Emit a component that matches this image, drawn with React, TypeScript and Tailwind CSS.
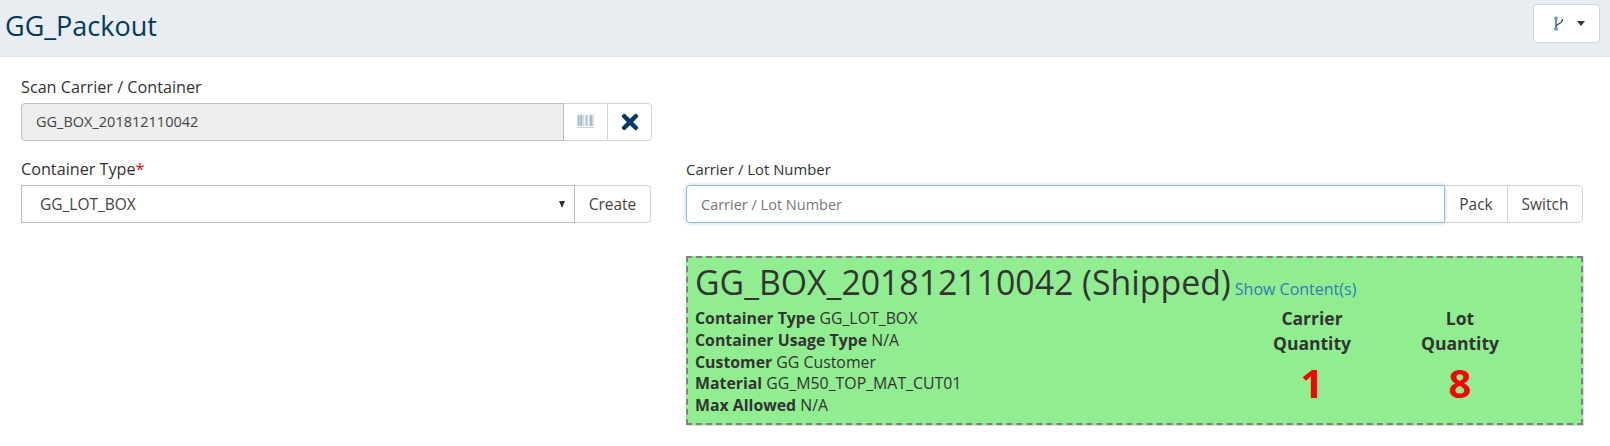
import React from 'react';
import { FaTimes } from 'react-icons/fa';

const BarcodeIcon = () => (
  <svg width="17" height="14" viewBox="0 0 17 14">
    <rect x="0" y="0" width="17" height="11" fill="#d3dde9" />
    <rect x="1" y="0" width="1" height="11" fill="#9fb5d0" />
    <rect x="3" y="0" width="2" height="11" fill="#a9bcd4" />
    <rect x="7" y="0" width="1" height="11" fill="#f2f5f9" />
    <rect x="9" y="0" width="1" height="11" fill="#a9bcd4" />
    <rect x="11" y="0" width="1" height="11" fill="#f2f5f9" />
    <rect x="13" y="0" width="2" height="11" fill="#a9bcd4" />
    <rect x="0" y="12" width="17" height="1" fill="#c3cedc" />
  </svg>
);

const BranchIcon = () => (
  <svg width="10" height="15" viewBox="0 0 10 15" fill="none" stroke="#1d3f5e" strokeWidth="1.2">
    <path d="M2 3V12" />
    <path d="M2 10C3 7.5 8.5 8 8.5 3" />
    <circle cx="2" cy="2.2" r="1.2" stroke="#2f7fd0" fill="#fff" />
    <circle cx="2" cy="12.8" r="1.2" stroke="#2f7fd0" fill="#fff" />
  </svg>
);

const details = [
  { label: 'Container Type', value: 'GG_LOT_BOX' },
  { label: 'Container Usage Type', value: 'N/A' },
  { label: 'Customer', value: 'GG Customer' },
  { label: 'Material', value: 'GG_M50_TOP_MAT_CUT01' },
  { label: 'Max Allowed', value: 'N/A' },
];

const quantities = [
  { top: 'Carrier', bottom: 'Quantity', value: 1 },
  { top: 'Lot', bottom: 'Quantity', value: 8 },
];

const App: React.FC = () => {
  return (
    <div className="h-[446px] w-[1610px] overflow-hidden bg-white font-['Open_Sans',sans-serif] text-[#333]">
      <div className="flex h-[57px] items-start justify-between border-b border-[#e0e3e8] bg-[#e9ecf1] pt-[4px] pl-[5px] pr-[10px]">
        <h1 className="mt-[8px] text-[27px] leading-none text-[#003a63]">GG_Packout</h1>
        <button className="flex h-[39px] w-[67px] items-center justify-center gap-[13px] rounded-[4px] border border-[#d0d3d8] bg-white pl-[6px]">
          <BranchIcon />
          <span className="h-0 w-0 border-x-[4px] border-t-[5px] border-x-transparent border-t-[#333]" />
        </button>
      </div>

      <div className="flex gap-[34px] pl-[21px] pr-[27px]">
        <div className="w-[631px] shrink-0">
          <label className="mt-[19px] block text-[16.2px] leading-[22px] font-medium">Scan Carrier / Container</label>
          <div className="mt-[5px] flex h-[38px]">
            <div className="flex flex-1 items-center rounded-l-[4px] border border-[#bcbcbc] bg-[#eeeeee] pl-[14px] text-[14.5px] text-[#444]">
              GG_BOX_201812110042
            </div>
            <div className="flex w-[43px] items-center justify-center border-y border-[#d0d3d8]">
              <BarcodeIcon />
            </div>
            <div className="flex w-[45px] items-center justify-center rounded-r-[4px] border border-[#d0d3d8] text-[24px] text-[#003a63]">
              <FaTimes />
            </div>
          </div>
          <label className="mt-[17px] block text-[16.2px] leading-[22px] font-medium">
            Container Type<span className="text-[#ff0000]">*</span>
          </label>
          <div className="mt-[5px] flex h-[38px]">
            <div className="flex w-[554px] items-center justify-between border border-[#bcbcbc] pt-[1px] pr-[9px] pl-[18px] text-[15.5px] text-[#444]">
              GG_LOT_BOX
              <span className="h-0 w-0 border-x-[3.5px] border-t-[7px] border-x-transparent border-t-[#333]" />
            </div>
            <button className="mr-[1px] flex-1 rounded-r-[4px] border-y border-r border-[#d0d3d8] pt-[1px] text-[15.5px] text-[#444]">Create</button>
          </div>
        </div>

        <div className="flex-1 pt-[101px]">
          <label className="block text-[14.9px] leading-[22px] font-medium">Carrier / Lot Number</label>
          <div className="mt-[5px] flex h-[38px]">
            <div className="flex flex-1 items-center rounded-l-[4px] border border-[#8fb8de] pt-[1px] pl-[14px] text-[14.5px] text-[#777] shadow-[0_0_4px_rgba(102,160,220,0.45)]">
              Carrier / Lot Number
            </div>
            <button className="w-[62px] border-y border-[#d0d3d8] pt-[1px] text-[15.4px] text-[#444]">Pack</button>
            <button className="w-[76px] rounded-r-[4px] border border-[#d0d3d8] pt-[1px] text-[15.5px] text-[#444]">Switch</button>
          </div>

          <div className="mt-[33px] flex h-[169px] flex-col border-2 border-dashed border-[#808080] bg-[#90ee90] px-[7px] shadow-[1px_1px_0_#dddddd]">
            <div className="flex items-baseline gap-[4px] pt-[2px]">
              <span className="text-[33.8px] leading-[44px]">GG_BOX_201812110042 (Shipped)</span>
              <a className="text-[16px] text-[#337ab7]">Show Content(s)</a>
            </div>
            <div className="flex">
              <div className="mt-[4px] w-[543px] text-[15.85px] leading-[21.8px]">
                {details.map((row) => (
                  <div key={row.label}>
                    <span className="font-bold">{row.label}</span> {row.value}
                  </div>
                ))}
              </div>
              <div className="mt-[2px] flex">
                {quantities.map((q) => (
                  <div key={q.top} className="w-[148px] text-center text-[17.5px] leading-[25px] font-bold">
                    <div>{q.top}</div>
                    <div>{q.bottom}</div>
                    <div className="mt-[2px] text-[40px] leading-[50px] text-[#ff0000]">{q.value}</div>
                  </div>
                ))}
              </div>
            </div>
          </div>
        </div>
      </div>
    </div>
  );
};

export default App;
